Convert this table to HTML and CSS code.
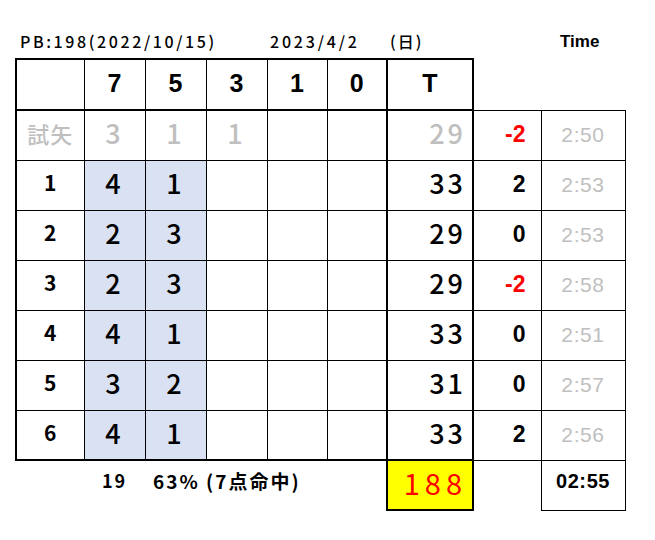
FILE: index.html
```html
<!DOCTYPE html>
<html lang="ja">
<head>
<meta charset="utf-8">
<title>Score sheet</title>
<link rel="stylesheet" href="styles.css">
</head>
<body>
<div class="sheet">
  <div class="topline">
    <span class="pb">PB:198(2022/10/15)</span>
    <span class="date">2023/4/2</span>
    <span class="dow">(日)</span>
    <span class="timehead">Time</span>
  </div>
  <table class="grid">
    <colgroup>
      <col class="c-label"><col class="c-s"><col class="c-s"><col class="c-s"><col class="c-s2"><col class="c-s2"><col class="c-total"><col class="c-diff"><col class="c-time">
    </colgroup>
    <tr class="head">
      <td class="lbl"></td>
      <td>7</td><td>5</td><td>3</td><td>1</td><td>0</td>
      <td class="tot">T</td>
      <td class="none"></td><td class="none"></td>
    </tr>
    <tr class="trial">
      <td class="lbl">試矢</td>
      <td>3</td><td>1</td><td>1</td><td></td><td></td>
      <td class="tot">29</td>
      <td class="diff neg">-2</td><td class="time">2:50</td>
    </tr>
    <tr>
      <td class="lbl">1</td>
      <td class="hl">4</td><td class="hl">1</td><td></td><td></td><td></td>
      <td class="tot">33</td>
      <td class="diff">2</td><td class="time">2:53</td>
    </tr>
    <tr>
      <td class="lbl">2</td>
      <td class="hl">2</td><td class="hl">3</td><td></td><td></td><td></td>
      <td class="tot">29</td>
      <td class="diff">0</td><td class="time">2:53</td>
    </tr>
    <tr>
      <td class="lbl">3</td>
      <td class="hl">2</td><td class="hl">3</td><td></td><td></td><td></td>
      <td class="tot">29</td>
      <td class="diff neg">-2</td><td class="time">2:58</td>
    </tr>
    <tr>
      <td class="lbl">4</td>
      <td class="hl">4</td><td class="hl">1</td><td></td><td></td><td></td>
      <td class="tot">33</td>
      <td class="diff">0</td><td class="time">2:51</td>
    </tr>
    <tr>
      <td class="lbl">5</td>
      <td class="hl">3</td><td class="hl">2</td><td></td><td></td><td></td>
      <td class="tot">31</td>
      <td class="diff">0</td><td class="time">2:57</td>
    </tr>
    <tr class="last">
      <td class="lbl">6</td>
      <td class="hl">4</td><td class="hl">1</td><td></td><td></td><td></td>
      <td class="tot">33</td>
      <td class="diff">2</td><td class="time">2:56</td>
    </tr>
    <tr class="sum">
      <td class="none"></td>
      <td class="none count">19</td>
      <td class="none rate" colspan="4">63% (7点命中)</td>
      <td class="grand">188</td>
      <td class="none"></td>
      <td class="avg">02:55</td>
    </tr>
  </table>
</div>
</body>
</html>
```
FILE: styles.css
```css
html, body {
  margin: 0;
  padding: 0;
  background: #ffffff;
}

.sheet {
  padding: 29px 0 0 15px;
  font-family: "Noto Sans CJK JP", "Noto Sans", sans-serif;
  color: #000;
}

.topline {
  height: 24px;
  display: flex;
  align-items: center;
  font-size: 16px;
  font-weight: 500;
  margin-bottom: 5px;
  line-height: 1;
}

.pb {
  margin-left: 5px;
  width: 250px;
  letter-spacing: 2.6px;
}

.date {
  width: 120px;
  letter-spacing: 2.8px;
}

.dow {
  width: 170px;
  letter-spacing: 2px;
}

.timehead {
  font-family: "Liberation Sans", Arial, sans-serif;
  font-weight: 700;
  font-size: 17px;
}

.grid {
  border-collapse: collapse;
  table-layout: fixed;
  width: 609px;
}

.c-label { width: 68px; }
.c-s { width: 61px; }
.c-s2 { width: 60px; }
.c-total { width: 86px; }
.c-diff { width: 68px; }
.c-time { width: 84px; }

.grid tr {
  height: 50px;
}

.grid td {
  padding: 0 0 5px 0;
  text-align: center;
  vertical-align: middle;
  border: 1px solid #000;
  font-size: 27px;
  font-weight: 500;
  letter-spacing: 3px;
  line-height: 1;
}

.grid td.lbl {
  border-left: 2px solid #000;
  font-size: 21px;
  font-weight: 700;
  letter-spacing: 0;
}

.grid td.tot {
  border-left: 2px solid #000;
  border-right: 2px solid #000;
  text-align: right;
  padding-right: 6px;
}

.grid tr.head {
  height: 51px;
}

.grid tr.head td {
  padding: 0 0 3px 0;
  border-top: 2px solid #000;
  border-bottom: 2px solid #000;
  font-family: "Liberation Sans", Arial, sans-serif;
  font-weight: 700;
  font-size: 25px;
  letter-spacing: 0;
}

.grid tr.head td.lbl {
  border-left: 2px solid #000;
}

.grid tr.head td.tot {
  border-left: 2px solid #000;
  border-right: 2px solid #000;
  text-align: center;
}

.grid tr.head td.none {
  border: none;
  border-bottom: 1px solid #000;
}

.grid tr.trial td {
  color: #bfbfbf;
}

.grid tr.trial td.lbl {
  font-weight: 500;
  font-size: 22px;
  letter-spacing: 1px;
}

.grid td.hl {
  background: #d9e1f2;
}

.grid td.diff {
  border-left: 2px solid #000;
  border-right: 1px solid #000;
  text-align: right;
  padding: 0 15px 1px 0;
  font-family: "Liberation Sans", Arial, sans-serif;
  font-weight: 700;
  font-size: 23px;
  letter-spacing: 0;
}

.grid td.neg,
.grid tr.trial td.diff.neg {
  color: #ff0000;
}

.grid td.time {
  padding: 0 0 1px 0;
  color: #bfbfbf;
  font-family: "Liberation Sans", Arial, sans-serif;
  font-weight: 400;
  font-size: 21px;
  letter-spacing: 0.6px;
}

.grid tr.last td {
  border-bottom: 2px solid #000;
}

.grid tr.last td.diff,
.grid tr.last td.time {
  border-bottom: 1px solid #000;
}

.grid tr.sum td.none {
  border: none;
}

.grid tr.sum td.count {
  font-size: 18px;
  font-weight: 700;
  letter-spacing: 2px;
  padding-bottom: 11px;
}

.grid tr.sum td.rate {
  text-align: left;
  padding: 0 0 11px 8px;
  font-size: 19px;
  font-weight: 700;
  letter-spacing: 2px;
}

.grid td.grand {
  background: #ffff00;
  color: #ff0000;
  border: 2px solid #000;
  text-align: right;
  padding-right: 5px;
  font-weight: 400;
  font-size: 29px;
  letter-spacing: 5px;
}

.grid td.avg {
  padding: 0 0 9px 0;
  font-family: "Liberation Sans", Arial, sans-serif;
  font-weight: 700;
  font-size: 20px;
  letter-spacing: 0.6px;
}
```
